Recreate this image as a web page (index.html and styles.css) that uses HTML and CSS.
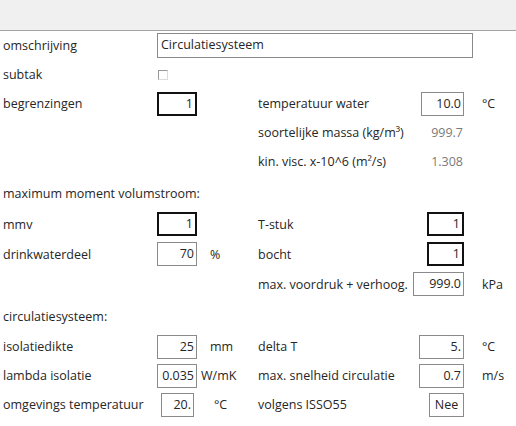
FILE: index.html
```html
<!DOCTYPE html>
<html lang="nl">
<head>
    <meta charset="UTF-8">
    <title>Circulatiesysteem</title>
    <link rel="stylesheet" href="styles.css">
</head>
<body>
    <div class="toolbar"></div>
    <div class="form">
        <div class="row">
            <span class="label">omschrijving</span>
            <span class="field text wide">Circulatiesysteem</span>
        </div>
        <div class="row">
            <span class="label">subtak</span>
            <span class="check"></span>
        </div>
        <div class="row">
            <span class="label">begrenzingen</span>
            <span class="field bold">1</span>
            <span></span>
            <span class="label">temperatuur water</span>
            <span class="field w43">10.0</span>
            <span class="unit2">°C</span>
        </div>
        <div class="row">
            <span></span><span></span><span></span>
            <span class="label">soortelijke massa (kg/m³)</span>
            <span class="value">999.7</span>
        </div>
        <div class="row">
            <span></span><span></span><span></span>
            <span class="label">kin. visc. x-10^6 (m²/s)</span>
            <span class="value">1.308</span>
        </div>

        <div class="heading">maximum moment volumstroom:</div>
        <div class="section-mid">
            <div class="row">
                <span class="label">mmv</span>
                <span class="field bold">1</span>
                <span></span>
                <span class="label">T-stuk</span>
                <span class="field bold w37">1</span>
            </div>
            <div class="row">
                <span class="label">drinkwaterdeel</span>
                <span class="field">70</span>
                <span class="unit">%</span>
                <span class="label">bocht</span>
                <span class="field bold w37">1</span>
            </div>
            <div class="row">
                <span></span><span></span><span></span>
                <span class="label">max. voordruk + verhoog.</span>
                <span class="field w51">999.0</span>
                <span class="unit2">kPa</span>
            </div>
        </div>

        <div class="heading">circulatiesysteem:</div>
        <div class="row">
            <span class="label">isolatiedikte</span>
            <span class="field">25</span>
            <span class="unit">mm</span>
            <span class="label">delta T</span>
            <span class="field w45">5.</span>
            <span class="unit2">°C</span>
        </div>
        <div class="row">
            <span class="label">lambda isolatie</span>
            <span class="field">0.035</span>
            <span class="unit tight">W/mK</span>
            <span class="label">max. snelheid circulatie</span>
            <span class="field w45">0.7</span>
            <span class="unit2">m/s</span>
        </div>
        <div class="row">
            <span class="label">omgevings temperatuur</span>
            <span class="field short">20.</span>
            <span class="unit deg">°C</span>
            <span class="label">volgens ISSO55</span>
            <span class="field button">Nee</span>
        </div>
    </div>
</body>
</html>
```

FILE: styles.css
```css
body {
    margin: 0;
    background-color: #ffffff;
    font-family: "Open Sans", "Noto Sans", sans-serif;
    font-size: 12.5px;
    color: #262626;
}
.toolbar {
    height: 30px;
    background-color: #f0f0f0;
    border-bottom: 1px solid #a3a3a3;
}
.form {
    padding-left: 3px;
}
.row {
    display: grid;
    grid-template-columns: 154px 42px 59px 156px 52px 1fr;
    align-items: center;
    height: 29px;
}
.section-mid .row {
    height: 30px;
}
.heading {
    height: 30px;
    margin-top: 3px;
    line-height: 30px;
}
.label {
    white-space: nowrap;
}
.field {
    box-sizing: border-box;
    width: 40px;
    height: 24px;
    line-height: 22px;
    border: 1px solid #8a8a8a;
    text-align: right;
    padding-right: 2px;
    white-space: nowrap;
}
.field.bold {
    border: 2px solid #111111;
    line-height: 20px;
}
.field.text {
    text-align: left;
    padding-left: 3px;
}
.field.wide {
    grid-column: 2 / 7;
    width: 316px;
    height: 25px;
}
.row > .field:nth-child(5) {
    justify-self: end;
    margin-right: 2px;
}
.field.w43 { width: 43px; }
.field.w37 { width: 37px; }
.field.w51 { width: 51px; }
.field.w45 { width: 45px; }
.field.short {
    width: 33px;
    margin-left: 4px;
}
.field.button {
    width: 35px;
    text-align: center;
    padding-right: 0;
    margin-right: 3px;
}
.check {
    box-sizing: border-box;
    width: 10px;
    height: 10px;
    margin-left: 1px;
    border: 1px solid #9a9a9a;
    border-right-color: #dcdcdc;
    border-bottom-color: #dcdcdc;
}
.value {
    justify-self: end;
    margin-right: 3px;
    color: #7a7a7a;
}
.unit {
    padding-left: 11px;
}
.unit.tight {
    padding-left: 2px;
}
.unit.deg {
    padding-left: 15px;
}
.unit2 {
    padding-left: 16px;
}
```
